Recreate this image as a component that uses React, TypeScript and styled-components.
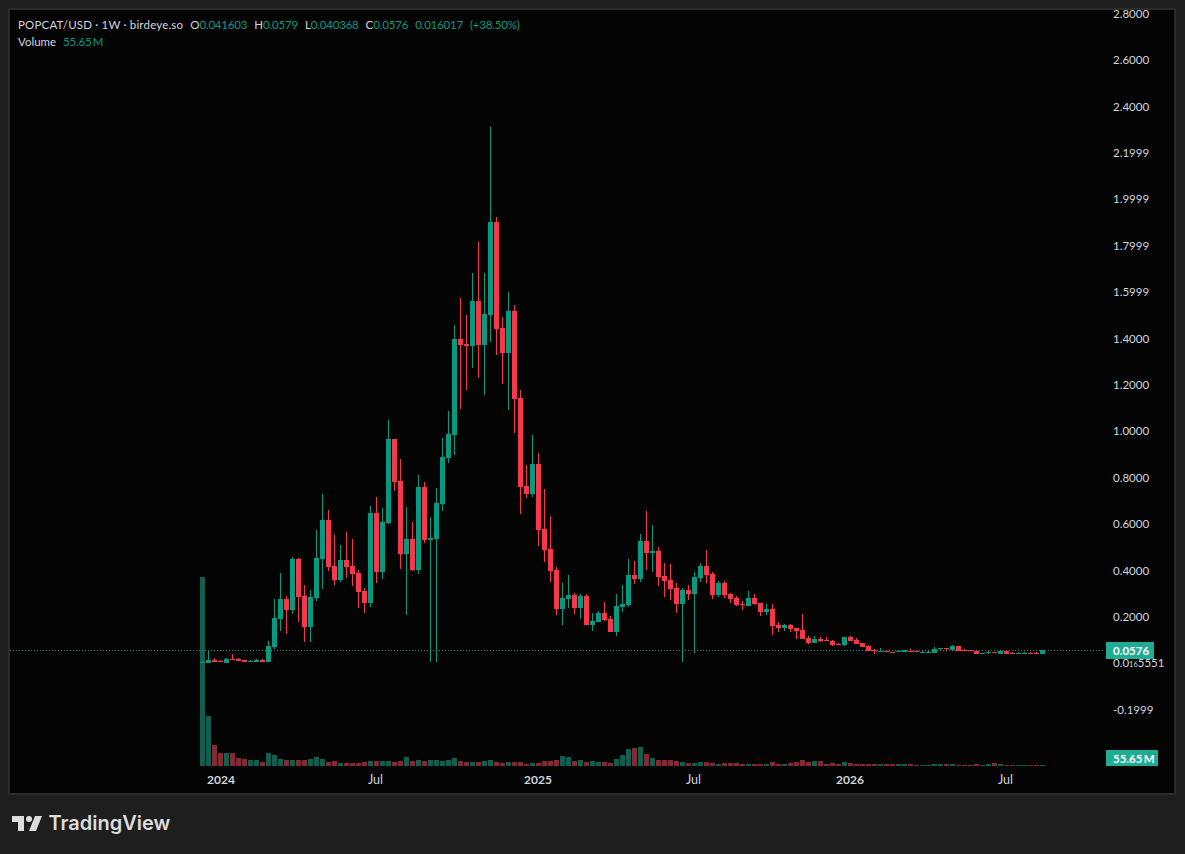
import styled, { createGlobalStyle } from "styled-components"

const GlobalStyle = createGlobalStyle`
  html, body {
    margin: 0;
    padding: 0;
    background: #1e1e1e;
  }
`

const UP = "#089981"
const DOWN = "#f7374a"
const UP_VOL = "#125e4f"
const DOWN_VOL = "#822b35"

// up, body top, body bottom, wick top, wick bottom (page px)
type Candle = [number, number, number, number?, number?]

const candles: Candle[] = [
  [1, 662, 663, 661, 663], [1, 660, 663, 650, 663], [0, 660, 662, 658], [0, 661, 662, 660], [1, 659, 663, 658],
  [0, 659, 660, 654], [0, 659, 661, 658], [0, 660, 662], [1, 661, 662, 660], [1, 660, 662, 659],
  [0, 660, 662, 659], [1, 646, 662, 641], [1, 618, 647, 599, 649], [1, 599, 619, 573, 631], [0, 599, 610, 596, 634],
  [1, 559, 610, 557, 614], [0, 559, 597, 558, 622], [0, 596, 627, 585, 642], [1, 597, 627, 590, 642], [1, 558, 598, 530, 601],
  [1, 520, 559, 494, 589], [0, 520, 567, 510, 571], [0, 566, 580, 535, 585], [1, 560, 580, 545, 582], [0, 560, 567, 532, 578],
  [0, 566, 574, 539, 586], [0, 573, 592, 570, 608], [0, 591, 603, 588, 613], [1, 513, 603, 506, 607], [0, 513, 572, 497, 583],
  [1, 522, 572, 508, 579], [1, 439, 523, 420, 524], [0, 439, 482, 439, 491], [0, 481, 554, 459, 569], [1, 539, 554, 507, 615],
  [0, 539, 570, 522, 571], [1, 487, 570, 475, 574], [0, 487, 540, 482, 543], [1, 538, 540, 517, 662], [1, 503, 539, 488, 662],
  [1, 457, 504, 438, 511], [1, 434, 458, 411, 463], [1, 339, 435, 325, 455], [0, 339, 345, 298, 409], [0, 344, 346, 315, 390],
  [1, 301, 346, 273, 368], [0, 301, 345, 242, 378], [1, 314, 345, 273, 395], [1, 222, 315, 127, 342], [0, 222, 329, 217, 355],
  [0, 328, 353, 317, 384], [1, 311, 353, 292, 410], [0, 311, 399, 305, 433], [0, 398, 487, 390, 514], [0, 486, 494, 465, 498],
  [1, 464, 494, 435, 497], [0, 464, 530, 453, 546], [0, 529, 550, 489, 562], [0, 549, 571, 516, 582], [0, 570, 609, 567, 615],
  [1, 598, 609, 583, 625], [1, 595, 599, 575, 608], [0, 595, 608, 593, 614], [1, 596, 608, 594, 619], [0, 596, 625, 594, 625],
  [1, 621, 625, 613, 631], [1, 613, 622, 611, 622], [0, 613, 620, 602, 621], [0, 619, 632, 616, 632], [1, 606, 632, 594, 636],
  [1, 604, 607, 585, 612], [1, 575, 605, 559, 607], [0, 575, 579, 561, 584], [1, 541, 579, 534, 582], [0, 541, 553, 511, 570],
  [1, 551, 553, 525, 572], [0, 551, 577, 547, 586], [0, 576, 581, 563, 597], [0, 580, 589, 564, 600], [0, 588, 604, 583, 613],
  [1, 590, 604, 588, 662], [0, 590, 594, 585, 600], [1, 577, 594, 572, 653], [1, 566, 578, 563, 582], [0, 566, 575, 550, 583],
  [0, 574, 595, 572, 599], [1, 583, 595, 581, 597], [0, 583, 595, 581, 598], [0, 594, 599, 593, 603], [0, 598, 605, 596, 606],
  [0, 604, 605, 601, 610], [1, 598, 606, 591, 606], [0, 598, 604, 594, 605], [0, 603, 612, 603, 616], [1, 609, 612, 604, 615],
  [0, 609, 626, 604, 635], [0, 625, 628, 622, 632], [1, 625, 628, 624, 631], [0, 625, 629, 624, 632], [0, 628, 631, 628, 639],
  [0, 630, 639, 614, 639], [0, 638, 643, 636, 644], [1, 639, 643, 636, 643], [0, 639, 641, 637, 642], [0, 640, 641, 637, 641],
  [0, 641, 645, 640, 646], [0, 644, 645, 643, 645], [1, 637, 645, 637, 646], [0, 637, 641, 636, 641], [0, 640, 644, 638, 644],
  [0, 643, 647], [0, 646, 651, 645, 651], [0, 650, 651, 649, 654], [1, 651, 652, 648, 652], [0, 651, 652],
  [0, 652, 653], [1, 651, 652], [1, 650, 652], [0, 651, 652, 649, 652], [0, 651, 652],
  [1, 652, 653, 650, 653], [1, 652, 653, 650, 653], [1, 649, 653, 647, 653], [1, 648, 649, 648, 651], [0, 648, 649, 648, 651],
  [1, 646, 650, 645, 650], [0, 646, 651], [0, 650, 651, 649, 651], [0, 650, 651], [0, 651, 654],
  [1, 653, 654], [1, 652, 653, 650, 654], [0, 652, 653], [1, 651, 654], [0, 651, 654],
  [0, 653, 654, 652, 654], [1, 653, 654, 652, 654], [1, 653, 654, 652, 654], [0, 653, 654, 652, 654], [0, 653, 654, 652, 654],
  [1, 650, 654],
]

const volumes = [
  189, 50, 21, 13, 13, 13, 8, 7, 6, 6, 4, 13, 11, 7, 6, 6, 6, 6, 7, 9,
  7, 4, 5, 3, 3, 3, 3, 4, 5, 5, 5, 5, 4, 5, 9, 5, 6, 5, 6, 6,
  5, 6, 8, 5, 4, 4, 4, 5, 6, 4, 3, 4, 4, 4, 2, 3, 3, 5, 5, 6,
  10, 9, 5, 6, 4, 5, 4, 4, 3, 7, 11, 17, 18, 19, 12, 8, 6, 6, 6, 5,
  4, 3, 3, 4, 4, 3, 2, 3, 3, 3, 2, 2, 2, 2, 2, 4, 2, 2, 3, 4,
  6, 4, 5, 5, 2, 3, 2, 4, 3, 2, 2, 2, 2, 2, 2, 2, 2, 2, 2, 1,
  1, 1, 2, 2, 2, 2, 1, 1, 1, 2, 1, 2, 3, 2, 1, 1, 1, 1, 1, 1, 1,
]

const priceLabels = [
  "2.8000", "2.6000", "2.4000", "2.1999", "1.9999", "1.7999", "1.5999", "1.4000",
  "1.2000", "1.0000", "0.8000", "0.6000", "0.4000", "0.2000",
]

const timeLabels = [
  { text: "2024", x: 197, year: true },
  { text: "Jul", x: 358, year: false },
  { text: "2025", x: 514, year: true },
  { text: "Jul", x: 676, year: false },
  { text: "2026", x: 826, year: true },
  { text: "Jul", x: 988, year: false },
]

const Page = styled.div`
  width: 1185px;
  height: 854px;
  display: flex;
  flex-direction: column;
  padding: 8px 9px 0 8px;
  box-sizing: border-box;
  background: #1e1e1e;
  font-family: "Lato", "Liberation Sans", sans-serif;
  overflow: hidden;
`

const Frame = styled.div`
  position: relative;
  height: 787px;
  flex-shrink: 0;
  box-sizing: border-box;
  border: 2px solid #2b2b2b;
  background: #040404;
  display: flex;
  flex-direction: column;
  overflow: hidden;
`

const TopRow = styled.div`
  display: flex;
  height: 756px;
`

const Plot = styled.svg`
  display: block;
  width: 1096px;
  height: 756px;
  flex-shrink: 0;
`

const PriceAxis = styled.div`
  flex: 1;
  display: flex;
  flex-direction: column;
  margin-top: -20px;
  padding-left: 7px;
`

const PriceLabel = styled.div`
  height: 46.42px;
  flex-shrink: 0;
  display: flex;
  align-items: center;
  font-size: 11.5px;
  color: #d1d4dc;
`

const Tiny = styled.span`
  font-size: 7.5px;
  padding-top: 3px;
`

const TimeAxis = styled.div`
  position: relative;
  height: 27px;
`

const TimeLabel = styled.span<{ $x: number; $year: boolean }>`
  position: absolute;
  left: ${(p) => p.$x}px;
  top: 6px;
  font-size: ${(p) => (p.$year ? 12 : 12.5)}px;
  line-height: 16px;
  font-weight: ${(p) => (p.$year ? 700 : 400)};
  color: #d1d4dc;
`

const Legend = styled.div`
  position: absolute;
  left: 8px;
  top: 6px;
  display: flex;
  flex-direction: column;
  font-size: 11.5px;
  line-height: 17px;
  color: #d1d4dc;
`

const LegendRow = styled.div`
  display: flex;
  gap: 7px;
  white-space: nowrap;
`

const LegendTitle = styled.span`
  letter-spacing: 0.18px;
`

const LegendItem = styled.span``

const Value = styled.span`
  color: ${UP};
  letter-spacing: -0.2px;
`

const Tag = styled.div<{ $top: number; $width: number; $height: number }>`
  position: absolute;
  left: 1096px;
  top: ${(p) => p.$top}px;
  width: ${(p) => p.$width}px;
  height: ${(p) => p.$height}px;
  padding-left: 7px;
  box-sizing: border-box;
  display: flex;
  align-items: center;
  background: #20ac93;
  color: #fff;
  font-size: 11.5px;
  font-weight: 700;
`

const Footer = styled.div`
  display: flex;
  align-items: center;
  gap: 6.5px;
  padding: 21px 0 0 4px;
`

const Wordmark = styled.span`
  font-family: "Inter", "Liberation Sans", sans-serif;
  font-size: 20px;
  line-height: 15px;
  font-weight: 600;
  color: #dcdcdc;
`

function Chart() {
  return (
    <Plot viewBox="10 10 1096 756" shapeRendering="crispEdges">
      {volumes.map((h, i) => (
        <rect key={i} x={200 + i * 6} y={766 - h} width={5} height={h} fill={candles[i][0] ? UP_VOL : DOWN_VOL} />
      ))}
      <line x1={10} x2={1104} y1={650.5} y2={650.5} stroke={UP} strokeDasharray="1 2" />
      {candles.map(([up, top, bottom, wickTop, wickBottom], i) => {
        const x = 200 + i * 6
        const color = up ? UP : DOWN
        const wt = wickTop ?? top
        const wb = wickBottom ?? bottom
        return (
          <g key={i} fill={color}>
            <rect x={x + 2} y={wt} width={1} height={wb - wt} />
            <rect x={x} y={top} width={5} height={bottom - top} />
          </g>
        )
      })}
    </Plot>
  )
}

function Logo() {
  return (
    <svg width="30" height="15" viewBox="2 2 30 15" fill="#dcdcdc">
      <path d="M14 2H2v6h6v9h6V2Zm12 15h-7l6-15h7l-6 15Zm-7-9a3 3 0 1 0 0-6 3 3 0 0 0 0 6Z" />
    </svg>
  )
}

export default function App() {
  return (
    <Page>
      <GlobalStyle />
      <Frame>
        <TopRow>
          <Chart />
          <PriceAxis>
            {priceLabels.map((label) => (
              <PriceLabel key={label}>{label}</PriceLabel>
            ))}
            <PriceLabel>
              0.0<Tiny>16</Tiny>5551
            </PriceLabel>
            <PriceLabel>-0.1999</PriceLabel>
          </PriceAxis>
        </TopRow>
        <TimeAxis>
          {timeLabels.map((t) => (
            <TimeLabel key={t.x} $x={t.x} $year={t.year}>{t.text}</TimeLabel>
          ))}
        </TimeAxis>
        <Legend>
          <LegendRow>
            <LegendTitle>POPCAT/USD · 1W · birdeye.so</LegendTitle>
            <LegendItem>O<Value>0.041603</Value></LegendItem>
            <LegendItem>H<Value>0.0579</Value></LegendItem>
            <LegendItem>L<Value>0.040368</Value></LegendItem>
            <LegendItem>C<Value>0.0576</Value></LegendItem>
            <Value>0.016017</Value>
            <Value>(+38.50%)</Value>
          </LegendRow>
          <LegendRow>
            <LegendItem>Volume</LegendItem>
            <Value>55.65{"\u2009"}M</Value>
          </LegendRow>
        </Legend>
        <Tag $top={632} $width={48} $height={17}>0.0576</Tag>
        <Tag $top={740} $width={52} $height={16}>55.65{"\u2009"}M</Tag>
      </Frame>
      <Footer>
        <Logo />
        <Wordmark>TradingView</Wordmark>
      </Footer>
    </Page>
  )
}
